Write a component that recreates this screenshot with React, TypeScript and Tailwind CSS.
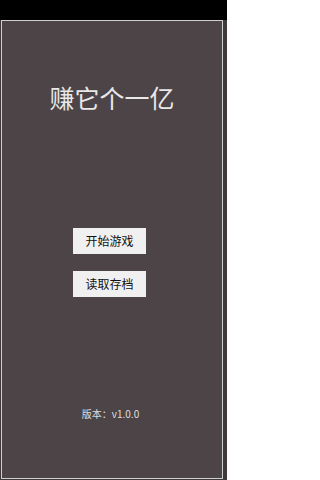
export default function App() {
  return (
    <div
      className="w-[227px] h-[480px] bg-black flex flex-col overflow-hidden"
      style={{ fontFamily: '"Noto Sans CJK SC", "Noto Sans", sans-serif' }}
    >
      <div className="h-[20px] shrink-0 bg-black" />
      <div className="flex-1 flex bg-[#3e3a3c]">
        <div className="ml-[1px] mb-[1px] w-[222px] border border-[#cfcfcf] bg-[#4c4447] flex flex-col items-center">
          <div className="mt-[64px] text-[25px] leading-[25px] text-[#e8e8e8] tracking-[0px]">
            赚它个一亿
          </div>
          <button className="mt-[118px] self-start ml-[71px] w-[73px] h-[26px] bg-[#f0f0f0] text-[12px] leading-[26px] text-[#111111]">
            开始游戏
          </button>
          <button className="mt-[17px] self-start ml-[71px] w-[73px] h-[26px] bg-[#f0f0f0] text-[12px] leading-[26px] text-[#111111]">
            读取存档
          </button>
          <div className="mt-[112px] ml-[-3px] text-[10px] leading-[10px] text-[#dedede]">
            版本：v1.0.0
          </div>
        </div>
      </div>
    </div>
  );
}
